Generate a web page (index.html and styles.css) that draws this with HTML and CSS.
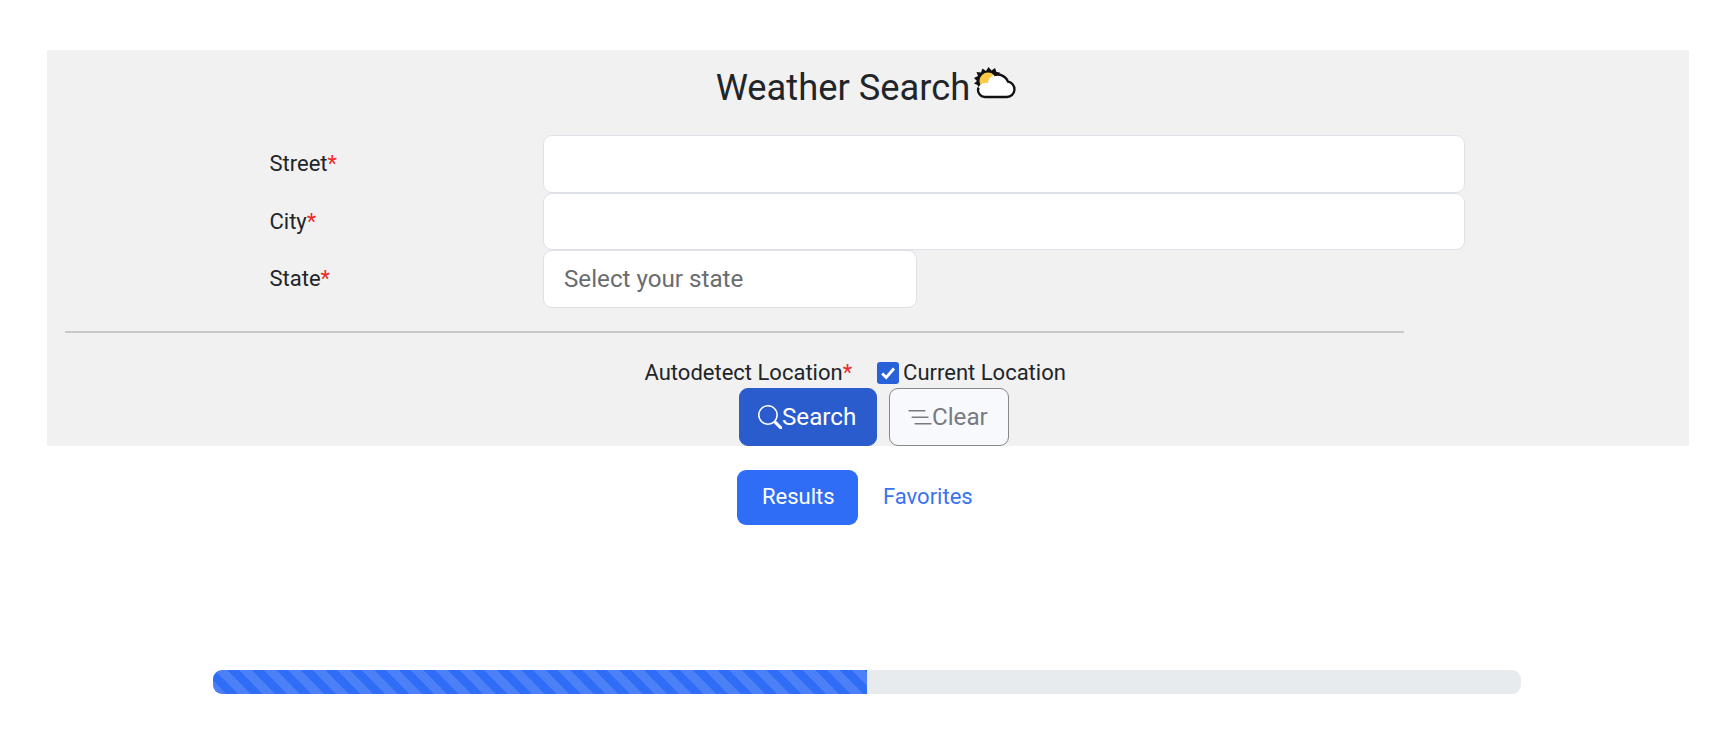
FILE: index.html
```html
<!DOCTYPE html>
<html lang="en">
<head>
<meta charset="utf-8">
<title>Weather Search</title>
<link rel="stylesheet" href="styles.css">
</head>
<body>
<form class="panel">
  <h1 class="title"><span class="title-text">Weather Search</span><svg class="weather" viewBox="0 0 44 36">
    <path d="M6 23 4.500 20 1 18.500 4 16 1 13 5 11 3.500 7 8 7.500 9.500 3.500 13 6 15.500 2 18.500 5.500 22 3 23.500 7 27 7.500 24 12 12 21z" fill="#111"/>
    <circle cx="15" cy="16" r="8.500" fill="#f9c947"/>
    <path d="M12 32h22a7.700 7.700 0 0 0 1-15.300C33.500 12.500 29.500 9.500 24.500 9.500c-5 0-9 3.500-9.500 8.500h-3a7 7 0 0 0 0 14z" fill="#fff"/>
    <path d="M21 10.200a11 11 0 0 1 14 6.500A7.700 7.700 0 0 1 34 32H12a7 7 0 0 1-6.500-9.500" fill="none" stroke="#111" stroke-width="2.300"/>
  </svg></h1>
  <div class="row"><label class="label" for="street">Street<span class="req">*</span></label><input class="field" id="street"></div>
  <div class="row"><label class="label" for="city">City<span class="req">*</span></label><input class="field" id="city"></div>
  <div class="row"><label class="label" for="state">State<span class="req">*</span></label><input class="field field-state" id="state" placeholder="Select your state"></div>
  <hr class="divider">
  <div class="detect"><span class="detect-label">Autodetect Location<span class="req">*</span></span><span class="check"><svg viewBox="0 0 22 22"><path d="M5.200 11.400 9.200 15.500 17 6.500" fill="none" stroke="#fff" stroke-width="2.800"/></svg></span><span class="current">Current Location</span></div>
  <div class="actions">
    <button class="btn btn-search" type="button"><svg class="icon" viewBox="0 0 16 16" fill="currentColor"><path d="M11.742 10.344a6.500 6.500 0 1 0-1.397 1.398h-.001c.030.040.062.078.098.115l3.850 3.850a1 1 0 0 0 1.415-1.414l-3.850-3.850a1.007 1.007 0 0 0-.115-.100zM12 6.500a5.500 5.500 0 1 1-11 0 5.500 5.500 0 0 1 11 0z"/></svg><span>Search</span></button>
    <button class="btn btn-clear" type="button"><svg class="icon" viewBox="0 0 16 16" fill="none" stroke="currentColor" stroke-linecap="round"><path d="M.700 3.700h10.300M2.700 8h10.300M4.700 12.300h10.300"/></svg><span>Clear</span></button>
  </div>
</form>
<nav class="tabs"><a class="tab tab-active">Results</a><a class="tab">Favorites</a></nav>
<div class="progress"><div class="bar"></div></div>
</body>
</html>
```
FILE: styles.css
```css
* { box-sizing: border-box; }
body { margin: 0; padding: 50px 47px 0; background: #fff; color: #212529; font-family: Roboto, sans-serif; font-size: 22px; line-height: 33px; }
.panel { height: 396px; background: #f1f1f1; }
.title { display: flex; justify-content: center; align-items: flex-start; height: 85px; margin: 0; padding: 16px 3px 0 0; font-size: 36.300px; font-weight: 400; line-height: 44px; }
.weather { width: 44px; height: 36px; margin: -1px 0 0 3px; }
.row { display: flex; align-items: center; height: 57.500px; padding-left: 222.500px; }
.label { width: 273.500px; }
.req { color: #f02828; }
.field { width: 922px; height: 57.500px; padding: 0 20px; border: 1.500px solid #dfe1e8; border-radius: 9px; background: #fff; font: 24.200px Roboto, sans-serif; color: #212529; }
.field-state { width: 374px; }
.field::placeholder { color: #6a6d70; opacity: 1; }
.divider { width: 1339px; height: 2px; margin: 23.500px 0 0 18px; border: 0; background: #c8c9ca; }
.detect { display: flex; align-items: center; height: 33px; margin: 23px 0 0 597.500px; }
.check { width: 22px; height: 22px; margin: 0 4.500px 0 24.500px; border-radius: 3px; background: #2961d9; }
.check svg { display: block; }
.actions { display: flex; gap: 12px; margin: -1px 0 0 691.500px; }
.btn { display: flex; align-items: center; height: 58px; padding: 0 18px; border: 1.500px solid; border-radius: 9px; font: 24.200px Roboto, sans-serif; }
.btn-search { width: 138px; background: #2a5cce; border-color: #2a5cce; color: #fff; }
.btn-clear { width: 120px; background: #f8f9fc; border-color: #85888c; color: #777b80; }
.icon { flex: none; width: 24.500px; height: 24.500px; }
.tabs { display: flex; margin: 24px 0 0 690px; }
.tab { height: 54.500px; padding: 0 25px; border-radius: 9px; line-height: 54px; color: #3874f2; }
.tab-active { width: 121px; background: #306df6; color: #fff; }
.progress { width: 1308px; height: 24.500px; margin: 145px 0 0 166px; border-radius: 9px; overflow: hidden; background: #e8ebee; }
.bar { width: 50%; height: 25px; background: #306df6 linear-gradient(45deg, rgba(255,255,255,.13) 25%, transparent 25%, transparent 50%, rgba(255,255,255,.13) 50%, rgba(255,255,255,.13) 75%, transparent 75%) 2px 0 / 24.500px 24.500px; }
```
